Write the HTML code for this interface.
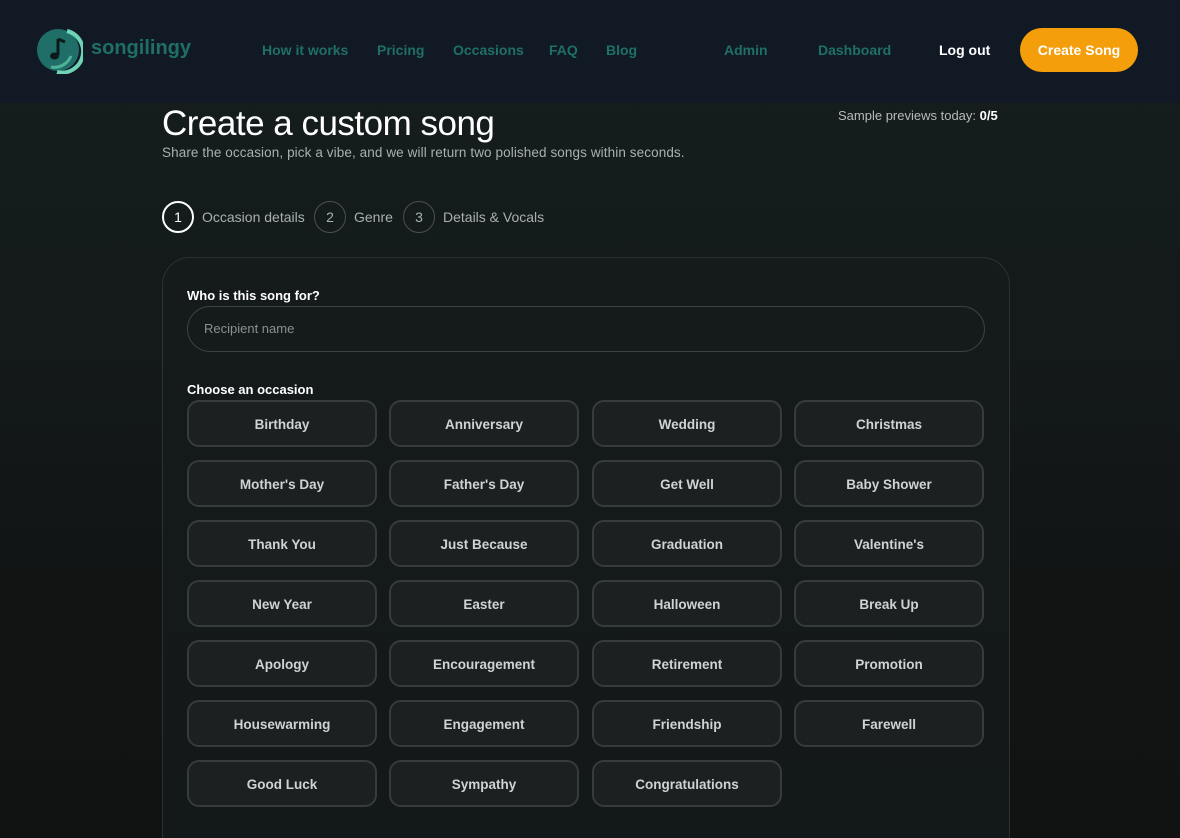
<!DOCTYPE html>
<html style="background:#111212;overflow:hidden"><head><style>
*{box-sizing:border-box;margin:0;padding:0}
html,body{width:1180px;height:838px;overflow:hidden}
body{font-family:"Liberation Sans",sans-serif;background:linear-gradient(180deg,#151e1e 0%,#141a1a 300px,#121414 600px,#111212 838px);color:#eee;position:relative}
.hdr{position:absolute;left:0;top:0;width:1180px;height:103px;background:#111a24;}
.nav a{position:absolute;top:42px;font-size:14px;font-weight:bold;color:#1f6f68;text-decoration:none}
.logo{position:absolute;left:37px;top:26px}
.brand{position:absolute;left:91px;top:37px;font-size:20px;font-weight:bold;color:#1f6f68}
.cta{position:absolute;left:1020px;top:28px;width:118px;height:44px;border-radius:22px;background:#f59e0b;color:#fff;font-size:14px;font-weight:bold;text-align:center;line-height:44px}
h1{position:absolute;left:162px;top:104px;font-size:35px;font-weight:normal;color:#fff;letter-spacing:-0.5px}
.sub{position:absolute;left:162px;top:145px;font-size:13.5px;color:#a9b0b0;letter-spacing:0.1px}
.prev{position:absolute;left:838px;top:108px;font-size:13px;color:#b5bbbb}
.step{position:absolute;top:201px;height:32px;display:flex;align-items:center;font-size:14px;color:#a9b0b0}
.step span.c{width:32px;height:32px;border-radius:50%;border:1px solid #4a5050;display:inline-flex;align-items:center;justify-content:center;margin-right:8px;font-size:14px}
.card{position:absolute;left:162px;top:257px;width:848px;height:620px;border:1px solid #2c3232;border-radius:28px;background:rgba(22,28,28,0.6)}
.lbl{position:absolute;left:187px;font-size:13px;font-weight:bold;color:#fff}
.inp{position:absolute;left:187px;top:306px;width:798px;height:46px;border:1px solid #3b4141;border-radius:23px;padding-left:16px;line-height:44px;font-size:13px;color:#8a9090}
.b{position:absolute;width:190px;height:47px;border:2px solid #363b3b;border-radius:12px;background:#1d2020;color:#cfd3d3;font-size:13.5px;font-weight:bold;text-align:center;line-height:45px}
</style></head><body>
<div class="hdr"></div>
<svg class="logo" width="46" height="48" viewBox="0 0 46 48"><circle cx="21" cy="24" r="21" fill="#1f6f68"/><path d="M30 5 A21 21 0 0 1 20 46" stroke="#6fd3b6" stroke-width="4" fill="none"/><path d="M14 41 A18 18 0 0 0 34 30" stroke="#4fb39a" stroke-width="3" fill="none"/><path d="M21 13 L21 29 M21 13 L28 16" stroke="#0d1a1a" stroke-width="3" fill="none"/><ellipse cx="17.5" cy="30" rx="4.5" ry="3.5" fill="#0d1a1a"/></svg>
<div class="brand">songilingy</div>
<div class="nav">
<a style="left:262px">How it works</a><a style="left:377px">Pricing</a><a style="left:453px">Occasions</a><a style="left:549px">FAQ</a><a style="left:606px">Blog</a><a style="left:724px">Admin</a><a style="left:818px">Dashboard</a><a style="left:939px;color:#fff">Log out</a>
</div>
<div class="cta">Create Song</div>
<h1>Create a custom song</h1>
<div class="sub">Share the occasion, pick a vibe, and we will return two polished songs within seconds.</div>
<div class="prev">Sample previews today: <b style="color:#fff">0/5</b></div>
<div class="step" style="left:162px"><span class="c" style="border:2px solid #fff;color:#fff">1</span>Occasion details</div>
<div class="step" style="left:314px"><span class="c">2</span>Genre</div>
<div class="step" style="left:403px"><span class="c">3</span>Details &amp; Vocals</div>
<div class="card"></div>
<div class="lbl" style="top:288px">Who is this song for?</div>
<div class="inp">Recipient name</div>
<div class="lbl" style="top:382px">Choose an occasion</div>
<div class="b" style="left:187px;top:400px">Birthday</div><div class="b" style="left:389px;top:400px">Anniversary</div><div class="b" style="left:592px;top:400px">Wedding</div><div class="b" style="left:794px;top:400px">Christmas</div>
<div class="b" style="left:187px;top:460px">Mother's Day</div><div class="b" style="left:389px;top:460px">Father's Day</div><div class="b" style="left:592px;top:460px">Get Well</div><div class="b" style="left:794px;top:460px">Baby Shower</div>
<div class="b" style="left:187px;top:520px">Thank You</div><div class="b" style="left:389px;top:520px">Just Because</div><div class="b" style="left:592px;top:520px">Graduation</div><div class="b" style="left:794px;top:520px">Valentine's</div>
<div class="b" style="left:187px;top:580px">New Year</div><div class="b" style="left:389px;top:580px">Easter</div><div class="b" style="left:592px;top:580px">Halloween</div><div class="b" style="left:794px;top:580px">Break Up</div>
<div class="b" style="left:187px;top:640px">Apology</div><div class="b" style="left:389px;top:640px">Encouragement</div><div class="b" style="left:592px;top:640px">Retirement</div><div class="b" style="left:794px;top:640px">Promotion</div>
<div class="b" style="left:187px;top:700px">Housewarming</div><div class="b" style="left:389px;top:700px">Engagement</div><div class="b" style="left:592px;top:700px">Friendship</div><div class="b" style="left:794px;top:700px">Farewell</div>
<div class="b" style="left:187px;top:760px">Good Luck</div><div class="b" style="left:389px;top:760px">Sympathy</div><div class="b" style="left:592px;top:760px">Congratulations</div>
</body></html>
